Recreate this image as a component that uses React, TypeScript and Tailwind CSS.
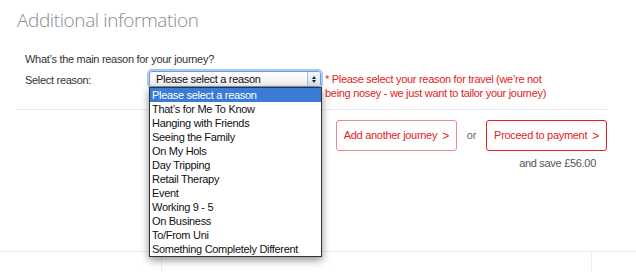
import React from 'react';

const reasons = [
  'Please select a reason',
  'That\u2019s for Me To Know',
  'Hanging with Friends',
  'Seeing the Family',
  'On My Hols',
  'Day Tripping',
  'Retail Therapy',
  'Event',
  'Working 9 - 5',
  'On Business',
  'To/From Uni',
  'Something Completely Different',
];

const font = { fontFamily: '"Liberation Sans", Arial, sans-serif' };

export default function App() {
  return (
    <div className="w-[636px] h-[272px] bg-white overflow-hidden relative tracking-[-0.3px]" style={font}>
      {/* Header */}
      <div className="px-[17px] pt-[8px]">
        <h1 className="text-[19px] leading-[24px] text-[#8a8a8a] tracking-[-0.4px]" style={{ fontFamily: '"Open Sans", sans-serif', fontWeight: 300 }}>
          Additional information
        </h1>
      </div>

      {/* Reason */}
      <div className="px-[25px] pt-[20px]">
        <p className="text-[11px] leading-[14px] text-[#333]">What&rsquo;s the main reason for your journey?</p>
        <div className="flex items-start mt-[5px]">
          <label className="w-[124px] text-[11px] leading-[14px] text-[#333] pt-[2px]">Select reason:</label>
          <div className="relative w-[172px] shrink-0">
            <div className="h-[16px] rounded-[3px] border border-[#6c9ee0] shadow-[0_0_0_2px_#a9c8f2] bg-gradient-to-b from-white to-[#f0f0f0] flex items-center">
              <span className="flex-1 pl-[6px] text-[11px] leading-[14px] text-[#111]">Please select a reason</span>
              <span className="w-[13px] h-full border-l border-[#bcbcbc] flex flex-col items-center justify-center gap-[1px] bg-gradient-to-b from-[#f3f7fd] to-[#d6e3f5] rounded-r-[2px]">
                <span className="w-0 h-0 border-l-[2.5px] border-r-[2.5px] border-b-[3px] border-l-transparent border-r-transparent border-b-[#222]" />
                <span className="w-0 h-0 border-l-[2.5px] border-r-[2.5px] border-t-[3px] border-l-transparent border-r-transparent border-t-[#222]" />
              </span>
            </div>
            {/* Open dropdown list */}
            <ul className="absolute left-0 top-[16px] w-[173px] bg-white border border-[#333] shadow-[0_3px_8px_rgba(0,0,0,0.45)] z-10">
              {reasons.map((r, i) => (
                <li
                  key={r}
                  className={`h-[14px] pl-[2px] text-[11px] leading-[14px] whitespace-nowrap ${i === 0 ? 'bg-[#3a7bd5] text-white' : 'text-[#111]'}`}
                >
                  {r}
                </li>
              ))}
            </ul>
          </div>
          <p className="ml-[4px] text-[11px] leading-[14px] text-[#e2231a] w-[230px] pt-[1px]">
            * Please select your reason for travel (we&rsquo;re not being nosey - we just want to tailor your journey)
          </p>
        </div>
      </div>

      {/* Divider + actions */}
      <div className="px-[17px] mt-[9px]">
        <div className="w-[590px] border-t border-dotted border-[#d8d8d8]" />
        <div className="w-[590px] flex justify-end items-center mt-[10px]">
          <button className="h-[31px] w-[121px] border border-[#ec8a8a] rounded-[3px] text-[11px] text-[#e2231a] flex items-center justify-center gap-[5px]">
            Add another journey <span className="text-[12px]">&gt;</span>
          </button>
          <span className="mx-[10px] text-[11px] text-[#666]">or</span>
          <button className="h-[31px] w-[121px] border border-[#e2231a] rounded-[3px] text-[11px] text-[#e2231a] flex items-center justify-center gap-[5px]">
            Proceed to payment <span className="text-[12px]">&gt;</span>
          </button>
        </div>
        <div className="w-[579px] flex justify-end mt-[5px]">
          <span className="text-[11px] leading-[14px] text-[#555]">and save &pound;56.00</span>
        </div>
      </div>

      {/* Bottom columns */}
      <div className="absolute left-0 right-0 top-[251px] border-t border-[#ececec] flex h-[21px]">
        <div className="w-[162px] border-r border-[#ececec]" />
        <div className="w-[430px] border-r border-[#ececec]" />
        <div className="flex-1" />
      </div>
    </div>
  );
}
